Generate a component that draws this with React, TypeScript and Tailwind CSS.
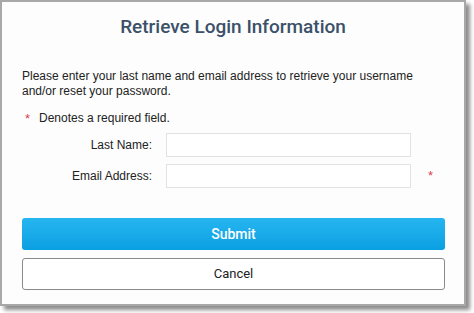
import React from "react";

export default function App() {
  return (
    <div className="w-[474px] h-[313px] bg-white">
      <div className="w-[466px] h-[306px] border-2 border-[#a8a8a8] bg-[#fdfdfd] shadow-[4px_4px_4px_rgba(0,0,0,0.45)] flex flex-col px-[20px]">
        <h1 className="mt-[13px] h-[24px] leading-[24px] text-center text-[19px] text-[#3b5069] font-['Roboto',sans-serif] font-medium">
          Retrieve Login Information
        </h1>
        <p className="mt-[30px] text-[12px] leading-[15px] text-[#222] font-['Liberation_Sans',sans-serif] whitespace-nowrap">
          Please enter your last name and email address to retrieve your username
          <br />
          and/or reset your password.
        </p>
        <div className="mt-[12px] h-[15px] leading-[15px] text-[12px] text-[#222] font-['Liberation_Sans',sans-serif] flex items-center">
          <span className="text-[#d9444f] text-[13px] ml-[3px] w-[14px]">*</span>
          <span>Denotes a required field.</span>
        </div>
        <div className="mt-[7px] flex flex-col gap-[7px] font-['Liberation_Sans',sans-serif] text-[12px] text-[#222]">
          <div className="flex items-center h-[24px]">
            <label className="w-[130px] text-right">Last Name:</label>
            <input className="ml-[14px] w-[245px] h-[24px] border border-[#e2e2e2] bg-white outline-none" />
          </div>
          <div className="flex items-center h-[24px]">
            <label className="w-[130px] text-right">Email Address:</label>
            <input className="ml-[14px] w-[245px] h-[24px] border border-[#e2e2e2] bg-white outline-none" />
            <span className="ml-[17px] text-[13px] text-[#d9444f]">*</span>
          </div>
        </div>
        <button className="mt-[30px] h-[32px] w-[423px] rounded-[3px] bg-gradient-to-b from-[#25b5f0] to-[#08a0e2] text-white text-[14px] font-['Roboto',sans-serif] font-medium">
          Submit
        </button>
        <button className="mt-[8px] h-[32px] w-[423px] rounded-[3px] border border-[#8a8a8a] bg-white text-[#222] text-[13px] font-['Roboto',sans-serif]">
          Cancel
        </button>
      </div>
    </div>
  );
}
